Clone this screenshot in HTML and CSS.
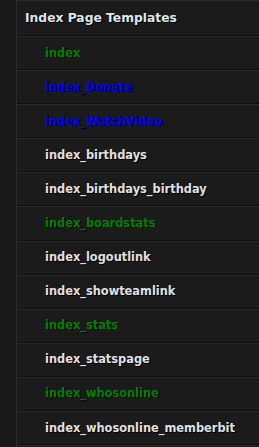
FILE: index.html
```html
<!DOCTYPE html>
<html lang="en">
<head>
    <meta charset="UTF-8">
    <title>Index Page Templates</title>
    <link rel="stylesheet" href="styles.css">
</head>
<body>
    <div class="page">
        <div class="gutter"></div>
        <div class="templates">
            <div class="thead">Index Page Templates</div>
            <div class="row green">index</div>
            <div class="row blue">index_Donate</div>
            <div class="row blue">index_WatchVideo</div>
            <div class="row">index_birthdays</div>
            <div class="row">index_birthdays_birthday</div>
            <div class="row green">index_boardstats</div>
            <div class="row">index_logoutlink</div>
            <div class="row">index_showteamlink</div>
            <div class="row green">index_stats</div>
            <div class="row">index_statspage</div>
            <div class="row green">index_whosonline</div>
            <div class="row">index_whosonline_memberbit</div>
            <div class="row"></div>
        </div>
    </div>
</body>
</html>
```

FILE: styles.css
```css
body {
    margin: 0;
    background-color: #1a1a1a;
    font-family: Tahoma, "DejaVu Sans", Verdana, sans-serif;
    overflow: hidden;
    height: 447px;
}
.page {
    display: flex;
    min-height: 447px;
}
.gutter {
    width: 16px;
    flex-shrink: 0;
    background-color: #181818;
}
.templates {
    flex: 1;
    border-left: 1px solid #2c2c2c;
    border-top: 1px solid #2a2a2a;
    background-color: #1b1b1b;
}
.thead,
.row {
    display: flex;
    align-items: center;
    font-weight: bold;
    border-bottom: 1px solid #0f0f0f;
    box-shadow: inset 0 1px 0 #2a2a2a;
    text-shadow: 1px 1px 0 #000000;
}
.thead {
    height: 34px;
    box-shadow: none;
    padding-left: 8px;
    font-size: 12.3px;
    color: #dfe6ee;
}
.row {
    height: 33.1px;
    padding-left: 28px;
    font-size: 11.4px;
    color: #e0e0e0;
}
.row.green {
    color: #008000;
}
.row.blue {
    color: #0000ff;
}
```
